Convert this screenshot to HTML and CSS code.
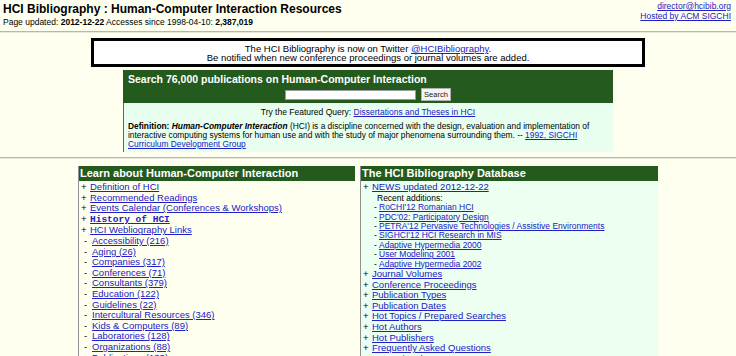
FILE: index.html
```html
<!DOCTYPE html>
<html>
<head>
<meta charset="utf-8">
<link rel="stylesheet" href="styles.css">
</head>
<body>
<div class="top">
  <div class="brand">
    <h1 class="title">HCI Bibliography : Human-Computer Interaction Resources</h1>
    <div class="updated">Page updated: <b>2012-12-22</b> Accesses since 1998-04-10: <b>2,387,019</b></div>
  </div>
  <div class="contact">
    <a href="#">director@hcibib.org</a><br>
    <a href="#">Hosted by ACM SIGCHI</a>
  </div>
</div>
<div class="rule"></div>
<div class="notice">
  The HCI Bibliography is now on Twitter <a href="#">@HCIBibliography</a>.<br>
  Be notified when new conference proceedings or journal volumes are added.
</div>
<div class="search">
  <div class="search-head">
    <div class="search-title">Search 76,000 publications on Human-Computer Interaction</div>
    <div class="search-form"><span class="input"></span><span class="button">Search</span></div>
  </div>
  <div class="search-body">
    <div class="featured">Try the Featured Query: <a href="#">Dissertations and Theses in HCI</a></div>
    <p class="definition"><b>Definition: <i>Human-Computer Interaction</i></b> (HCI) is a discipline concerned with the design, evaluation and implementation of interactive computing systems for human use and with the study of major phenomena surrounding them. -- <a href="#">1992, SIGCHI Curriculum Development Group</a></p>
  </div>
</div>
<div class="rule rule2"></div>
<div class="cols">
  <div class="col col-left">
    <div class="col-head">Learn about Human-Computer Interaction</div>
    <ul class="list">
      <li><span class="mk">+</span><a href="#">Definition of HCI</a></li>
      <li><span class="mk">+</span><a href="#">Recommended Readings</a></li>
      <li><span class="mk">+</span><a href="#">Events Calendar (Conferences &amp; Workshops)</a></li>
      <li><span class="mk">+</span><a href="#" class="mono">History of HCI</a></li>
      <li><span class="mk">+</span><a href="#">HCI Webliography Links</a></li>
      <li class="sub"><span class="mk">-</span><a href="#">Accessibility (216)</a></li>
      <li class="sub"><span class="mk">-</span><a href="#">Aging (26)</a></li>
      <li class="sub"><span class="mk">-</span><a href="#">Companies (317)</a></li>
      <li class="sub"><span class="mk">-</span><a href="#">Conferences (71)</a></li>
      <li class="sub"><span class="mk">-</span><a href="#">Consultants (379)</a></li>
      <li class="sub"><span class="mk">-</span><a href="#">Education (122)</a></li>
      <li class="sub"><span class="mk">-</span><a href="#">Guidelines (22)</a></li>
      <li class="sub"><span class="mk">-</span><a href="#">Intercultural Resources (346)</a></li>
      <li class="sub"><span class="mk">-</span><a href="#">Kids &amp; Computers (89)</a></li>
      <li class="sub"><span class="mk">-</span><a href="#">Laboratories (128)</a></li>
      <li class="sub"><span class="mk">-</span><a href="#">Organizations (88)</a></li>
      <li class="sub"><span class="mk">-</span><a href="#">Publications (133)</a></li>
    </ul>
  </div>
  <div class="col col-right">
    <div class="col-head">The HCI Bibliography Database</div>
    <ul class="list">
      <li><span class="mk">+</span><a href="#">NEWS updated 2012-12-22</a></li>
      <li class="recent">Recent additions:</li>
      <li class="small"><span class="mk">-</span><a href="#">RoCHI'12 Romanian HCI</a></li>
      <li class="small"><span class="mk">-</span><a href="#">PDC'02: Participatory Design</a></li>
      <li class="small"><span class="mk">-</span><a href="#">PETRA'12 Pervasive Technologies / Assistive Environments</a></li>
      <li class="small"><span class="mk">-</span><a href="#">SIGHCI'12 HCI Research in MIS</a></li>
      <li class="small"><span class="mk">-</span><a href="#">Adaptive Hypermedia 2000</a></li>
      <li class="small"><span class="mk">-</span><a href="#">User Modeling 2001</a></li>
      <li class="small"><span class="mk">-</span><a href="#">Adaptive Hypermedia 2002</a></li>
      <li><span class="mk">+</span><a href="#">Journal Volumes</a></li>
      <li><span class="mk">+</span><a href="#">Conference Proceedings</a></li>
      <li><span class="mk">+</span><a href="#">Publication Types</a></li>
      <li><span class="mk">+</span><a href="#">Publication Dates</a></li>
      <li><span class="mk">+</span><a href="#">Hot Topics / Prepared Searches</a></li>
      <li><span class="mk">+</span><a href="#">Hot Authors</a></li>
      <li><span class="mk">+</span><a href="#">Hot Publishers</a></li>
      <li><span class="mk">+</span><a href="#">Frequently Asked Questions</a></li>
      <li><span class="mk">+</span><a href="#">Accessing the Data</a></li>
    </ul>
  </div>
</div>
</body>
</html>
```

FILE: styles.css
```css
html, body {
  margin: 0;
  padding: 0;
  background: #fffff0;
  color: #000;
  font-family: "Liberation Sans", Arial, sans-serif;
}
a { color: #2020c8; }

.top {
  display: flex;
  justify-content: space-between;
  padding: 2px 5px 0 3px;
  height: 29px;
}
.title {
  margin: 0;
  font-size: 12px;
  line-height: 15px;
}
.updated {
  font-size: 8.5px;
  line-height: 11px;
}
.contact {
  text-align: right;
  font-size: 8.5px;
  line-height: 9.5px;
}

.rule {
  border-top: 1px solid #b8b8a8;
  border-bottom: 1px solid #e8e8dc;
}
.rule2 { margin-top: 5px; }

.notice {
  width: 548px;
  margin: 5px auto 0;
  border: 3px solid #000;
  background: #fff;
  text-align: center;
  font-size: 9.5px;
  line-height: 9px;
  padding: 3px 0 2px;
}

.search {
  width: 490px;
  margin: 3px auto 0;
}
.search-head {
  background: #245a1e;
  padding: 3px 0 0;
  height: 33px;
  box-sizing: border-box;
}
.search-title {
  color: #fff;
  font-weight: bold;
  font-size: 10.5px;
  line-height: 12px;
  padding-left: 5px;
}
.search-form {
  display: flex;
  justify-content: center;
  align-items: center;
  gap: 5px;
  margin-top: 3px;
}
.input {
  display: block;
  width: 129px;
  height: 8px;
  background: #fff;
  border: 1px solid #9a9a9a;
}
.button {
  display: block;
  font-size: 7.5px;
  line-height: 11px;
  padding: 0 2px;
  background: #f4f4f0;
  border: 1px solid #b0b0b0;
  color: #222;
}
.search-body {
  background: #e8fff0;
  border-left: 1px solid #5a6a5a;
  padding: 4px 5px 5px 4px;
  height: 49px;
  box-sizing: border-box;
}
.featured {
  text-align: center;
  font-size: 8.5px;
  line-height: 10px;
}
.definition {
  margin: 5px 0 0;
  font-size: 8.4px;
  line-height: 9px;
}

.cols {
  display: flex;
  justify-content: center;
  gap: 5px;
  margin-top: 7px;
}
.col {
  border-left: 1px solid #909090;
}
.col-left { width: 276px; }
.col-right { width: 297px; background: #ecfff0; }
.col-head {
  background: #245a1e;
  color: #fff;
  font-weight: bold;
  font-size: 11px;
  line-height: 15px;
  padding-left: 1px;
}
.list {
  list-style: none;
  margin: 0;
  padding: 1px 0 0 0;
  font-size: 9.5px;
  line-height: 10.6px;
}
.list li { white-space: nowrap; }
.mk {
  display: inline-block;
  width: 9px;
  padding-left: 2px;
}
.sub .mk {
  width: 8px;
  padding-left: 5px;
}
.mono {
  font-family: "Liberation Mono", "Courier New", monospace;
  font-weight: bold;
}
.recent {
  padding-left: 16px;
  font-size: 8.5px;
}
.small {
  font-size: 8.5px;
  line-height: 9.4px;
}
.small .mk {
  width: 5px;
  padding-left: 13px;
}
```
